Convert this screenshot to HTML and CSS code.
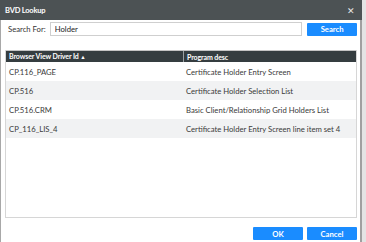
FILE: index.html
```html
<!DOCTYPE html>
<html>
<head>
<meta charset="utf-8">
<link rel="stylesheet" href="styles.css">
</head>
<body>
<div class="dialog">
  <div class="titlebar">
    <span class="title">BVD Lookup</span>
    <span class="close">&#x2715;</span>
  </div>
  <div class="content">
    <div class="searchrow">
      <label class="label">Search For:</label>
      <input class="input" type="text" value="Holder">
      <button class="btn search">Search</button>
    </div>
    <div class="grid">
      <div class="row head">
        <div class="c1">Browser View Driver Id <span class="arrow">&#x25B2;</span></div>
        <div class="c2">Program desc</div>
      </div>
      <div class="row">
        <div class="c1">CP.116_PAGE</div>
        <div class="c2">Certificate Holder Entry Screen</div>
      </div>
      <div class="row alt">
        <div class="c1">CP.516</div>
        <div class="c2">Certificate Holder Selection List</div>
      </div>
      <div class="row">
        <div class="c1">CP.516.CRM</div>
        <div class="c2">Basic Client/Relationship Grid Holders List</div>
      </div>
      <div class="row alt">
        <div class="c1">CP_116_LIS_4</div>
        <div class="c2">Certificate Holder Entry Screen line item set 4</div>
      </div>
    </div>
    <div class="footer">
      <button class="btn">OK</button>
      <button class="btn">Cancel</button>
    </div>
  </div>
</div>
</body>
</html>
```
FILE: styles.css
```css
html, body {
  margin: 0;
  padding: 0;
}
body {
  width: 366px;
  height: 242px;
  background: #e4e4e4;
  font-family: Lato, "Open Sans", sans-serif;
  overflow: hidden;
}
.dialog {
  width: 362px;
  height: 242px;
  background: #fff;
  display: flex;
  flex-direction: column;
}
.titlebar {
  height: 20px;
  background: #4c5254;
  display: flex;
  align-items: center;
  justify-content: space-between;
  padding: 0 7px 0 5px;
  color: #fff;
}
.title {
  font-size: 7.5px;
  font-weight: 700;
  letter-spacing: -0.2px;
}
.close {
  font-size: 9px;
  color: #e8e8e8;
}
.content {
  flex: 1;
  display: flex;
  flex-direction: column;
  border-left: 1px solid #a8a8a8;
  border-right: 2px solid #a0a0a0;
  padding: 0 3px 0 4px;
}
.searchrow {
  display: flex;
  align-items: center;
  height: 16px;
  margin-top: 1px;
}
.label {
  font-size: 7.7px;
  color: #333;
  padding-left: 3px;
  width: 42px;
  white-space: nowrap;
}
.input {
  box-sizing: border-box;
  width: 254px;
  height: 14px;
  border: 1px solid #cfcfcf;
  font-family: inherit;
  font-size: 7.7px;
  padding: 0 4px;
  color: #222;
  outline: none;
}
.btn {
  box-sizing: border-box;
  height: 13px;
  width: 50px;
  border: none;
  border-radius: 1px;
  background: #1a8cff;
  color: #fff;
  font-family: inherit;
  font-size: 7.7px;
  font-weight: 700;
  padding: 0;
}
.search {
  margin-left: 5px;
}
.grid {
  margin-top: 13px;
  height: 168px;
  box-sizing: border-box;
  border: 1px solid #d6d6d6;
  border-top: none;
}
.row {
  display: flex;
  height: 19px;
  align-items: center;
  font-size: 7.7px;
  color: #3a3a3a;
  white-space: nowrap;
}
.row.alt {
  background: #f1f2f3;
}
.row.head {
  height: 11px;
  background: #353d40;
  color: #fff;
  font-weight: 700;
  font-size: 7px;
  letter-spacing: -0.1px;
  border-top: 1px solid #c4c4c4;
}
.c1 {
  width: 174px;
  padding-left: 3px;
}
.c2 {
  flex: 1;
  padding-left: 3px;
}
.head .c1 {
  border-right: 1px solid #9aa0a2;
  height: 11px;
  line-height: 11px;
}
.arrow {
  font-size: 5.5px;
}
.footer {
  display: flex;
  justify-content: flex-end;
  gap: 4px;
  margin-top: 9px;
}
```
